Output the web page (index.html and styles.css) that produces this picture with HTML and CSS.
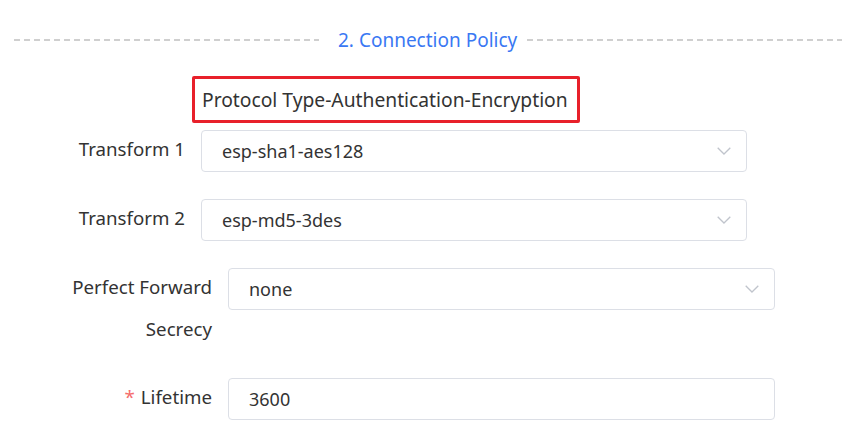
FILE: index.html
```html
<!DOCTYPE html>
<html lang="en">
<head>
<meta charset="utf-8">
<title>Connection Policy</title>
<link rel="stylesheet" href="styles.css">
</head>
<body>
<div class="divider">
  <span class="line line-left"></span>
  <span class="divider-title">2. Connection Policy</span>
  <span class="line line-right"></span>
</div>

<div class="hint">Protocol Type-Authentication-Encryption</div>

<div class="form">
  <div class="row">
    <div class="label label-narrow">Transform 1</div>
    <div class="select select-narrow">
      <span class="value">esp-sha1-aes128</span>
      <svg class="chevron" width="14" height="8" viewBox="0 0 14 8"><path d="M0.7 0.7 L7 7 L13.3 0.7" fill="none" stroke="#c0c4cc" stroke-width="1.3"/></svg>
    </div>
  </div>
  <div class="row">
    <div class="label label-narrow">Transform 2</div>
    <div class="select select-narrow">
      <span class="value">esp-md5-3des</span>
      <svg class="chevron" width="14" height="8" viewBox="0 0 14 8"><path d="M0.7 0.7 L7 7 L13.3 0.7" fill="none" stroke="#c0c4cc" stroke-width="1.3"/></svg>
    </div>
  </div>
  <div class="row row-tall">
    <div class="label label-wide">Perfect Forward<br>Secrecy</div>
    <div class="select select-wide">
      <span class="value">none</span>
      <svg class="chevron" width="14" height="8" viewBox="0 0 14 8"><path d="M0.7 0.7 L7 7 L13.3 0.7" fill="none" stroke="#c0c4cc" stroke-width="1.3"/></svg>
    </div>
  </div>
  <div class="row">
    <div class="label label-wide"><span class="req">*</span>Lifetime</div>
    <div class="select select-wide">
      <span class="value">3600</span>
    </div>
  </div>
</div>
</body>
</html>
```

FILE: styles.css
```css
html, body {
  margin: 0;
  padding: 0;
  background: #ffffff;
}

body {
  font-family: "Noto Sans", "Open Sans", "Liberation Sans", sans-serif;
  color: #333333;
  width: 863px;
  height: 438px;
  overflow: hidden;
}

.divider {
  display: flex;
  align-items: center;
  height: 30px;
  margin-top: 25px;
  padding-left: 14px;
  padding-right: 21px;
}

.line {
  height: 2px;
  background-image: repeating-linear-gradient(to right, #cfcfcf 0 6px, transparent 6px 10px);
}

.line-left {
  flex: 0 0 305px;
  margin-right: 19px;
}

.line-right {
  flex: 1 1 auto;
  margin-left: 10px;
}

.divider-title {
  color: #3a78f3;
  font-size: 19px;
  line-height: 30px;
  white-space: nowrap;
}

.hint {
  box-sizing: border-box;
  display: flex;
  align-items: center;
  width: 388px;
  height: 47px;
  margin: 21px 0 0 192px;
  padding-left: 7px;
  border: 3px solid #e8202a;
  border-radius: 2px;
  font-size: 19.25px;
  color: #333333;
  white-space: nowrap;
}

.form {
  margin-top: 7px;
}

.row {
  display: flex;
  align-items: flex-start;
  margin-bottom: 27px;
}

.row-tall {
  margin-bottom: 28px;
}

.label {
  box-sizing: border-box;
  margin-top: -2px;
  padding-right: 16px;
  text-align: right;
  font-size: 18.7px;
  line-height: 42px;
  color: #333333;
}

.label-narrow {
  width: 201px;
}

.label-wide {
  width: 228px;
}

.req {
  color: #f56c6c;
  margin-right: 6px;
}

.select {
  box-sizing: border-box;
  display: flex;
  align-items: center;
  justify-content: space-between;
  height: 42px;
  padding: 0 15px 0 20px;
  border: 1px solid #dcdfe6;
  border-radius: 4px;
  font-size: 18px;
  color: #333333;
}

.select-narrow {
  width: 546px;
}

.select-wide {
  width: 547px;
}

.chevron {
  display: block;
}
```
